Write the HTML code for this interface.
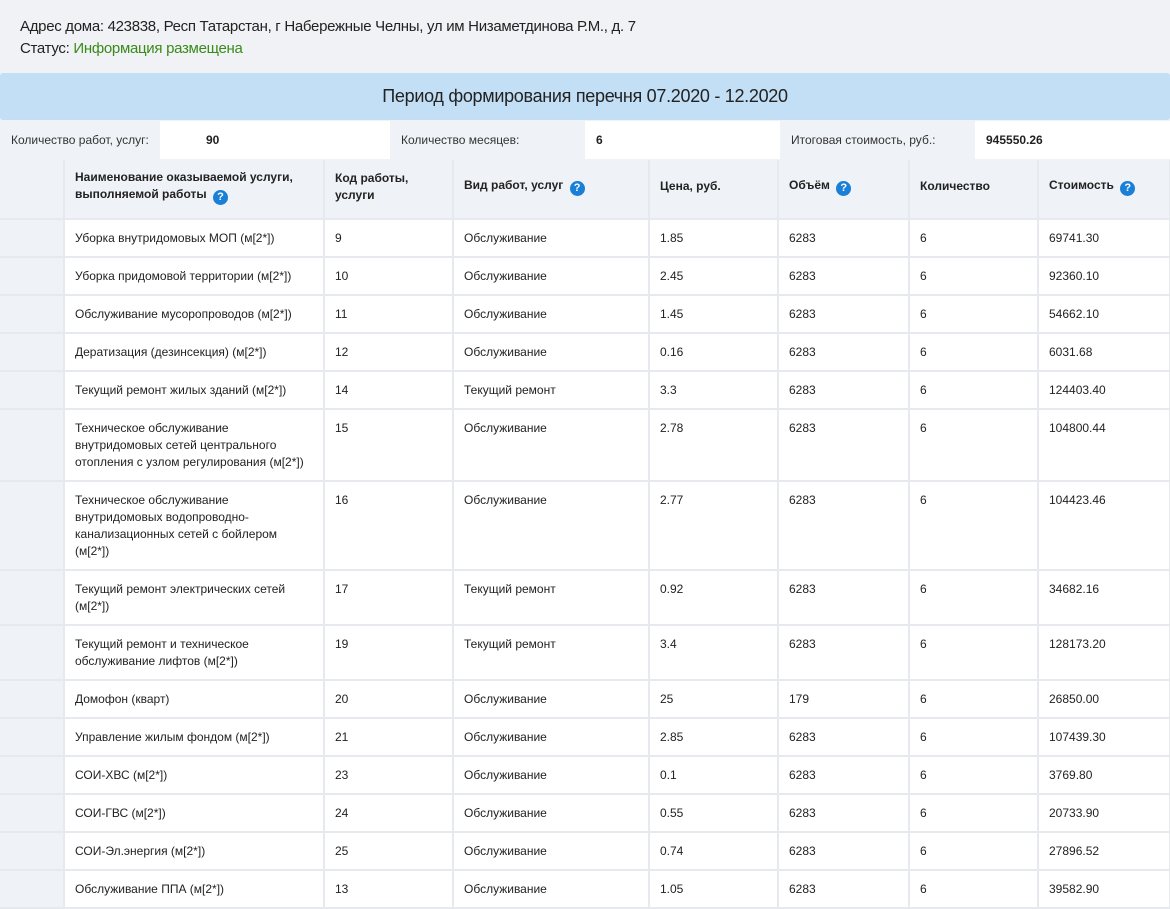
<!DOCTYPE html>
<html><head><meta charset="utf-8"><style>
*{box-sizing:border-box;margin:0;padding:0}
body{width:1170px;height:909px;overflow:hidden;background:#f0f2f5;font-family:"Liberation Sans Narrow","Liberation Sans",sans-serif;color:#222}
.addr{position:absolute;left:20px;top:16px;font-size:15px;line-height:22px;letter-spacing:-0.3px}
.addr .g{color:#3a8a1a}
.band{position:absolute;left:0;top:73px;width:1170px;height:47px;background:#c2dff5;border-radius:3px;text-align:center;font-size:18px;line-height:47px;color:#222;letter-spacing:-0.3px}
.info{position:absolute;left:0;top:121px;width:1170px;height:38px;font-size:12px}
.info div{position:absolute;top:0;height:38px;line-height:38px;padding-left:11px}
.lab{background:#eff2f6;color:#333}
.val{background:#fff;font-weight:bold;padding-left:46px!important}
table{position:absolute;left:0;top:160px;border-collapse:collapse;table-layout:fixed;width:1170px;font-size:12px}
td,th{border:2px solid #e6eaef;vertical-align:top;text-align:left;padding:10px 10px 9px 10px;line-height:17px}
th{background:#eff2f6;font-weight:bold;height:59px;vertical-align:middle;padding-top:4px;border-top:none}
td{background:#fff}
td:first-child,th:first-child{background:#eff2f6;border-left:none}
.q{display:inline-block;width:15px;height:15px;border-radius:50%;background:#1a7fd6;color:#fff;font-size:11px;line-height:15px;text-align:center;font-weight:bold;vertical-align:-2px;margin-left:3px}
</style></head><body>
<div class="addr">Адрес дома: 423838, Респ Татарстан, г Набережные Челны, ул им Низаметдинова Р.М., д. 7<br>Статус: <span class="g">Информация размещена</span></div>
<div class="band">Период формирования перечня 07.2020 - 12.2020</div>
<div class="info">
<div class="lab" style="left:0;width:160px">Количество работ, услуг:</div>
<div class="val" style="left:160px;width:230px;padding-left:46px">90</div>
<div class="lab" style="left:390px;width:195px">Количество месяцев:</div>
<div class="val" style="left:585px;width:195px;padding-left:11px!important">6</div>
<div class="lab" style="left:780px;width:195px">Итоговая стоимость, руб.:</div>
<div class="val" style="left:975px;width:195px;padding-left:11px!important">945550.26</div>
</div>
<table>
<colgroup><col style="width:64px"><col style="width:260px"><col style="width:129px"><col style="width:196px"><col style="width:129px"><col style="width:131px"><col style="width:129px"><col style="width:132px"></colgroup>
<tr><th></th><th>Наименование оказываемой услуги, выполняемой работы <span class="q">?</span></th><th>Код работы, услуги</th><th>Вид работ, услуг <span class="q">?</span></th><th>Цена, руб.</th><th>Объём <span class="q">?</span></th><th>Количество</th><th>Стоимость <span class="q">?</span></th></tr>
<tr style="height:38px"><td></td><td>Уборка внутридомовых МОП (м[2*])</td><td>9</td><td>Обслуживание</td><td>1.85</td><td>6283</td><td>6</td><td>69741.30</td></tr>
<tr style="height:38px"><td></td><td>Уборка придомовой территории (м[2*])</td><td>10</td><td>Обслуживание</td><td>2.45</td><td>6283</td><td>6</td><td>92360.10</td></tr>
<tr style="height:38px"><td></td><td>Обслуживание мусоропроводов (м[2*])</td><td>11</td><td>Обслуживание</td><td>1.45</td><td>6283</td><td>6</td><td>54662.10</td></tr>
<tr style="height:38px"><td></td><td>Дератизация (дезинсекция) (м[2*])</td><td>12</td><td>Обслуживание</td><td>0.16</td><td>6283</td><td>6</td><td>6031.68</td></tr>
<tr style="height:38px"><td></td><td>Текущий ремонт жилых зданий (м[2*])</td><td>14</td><td>Текущий ремонт</td><td>3.3</td><td>6283</td><td>6</td><td>124403.40</td></tr>
<tr style="height:72px"><td></td><td>Техническое обслуживание внутридомовых сетей центрального отопления с узлом регулирования (м[2*])</td><td>15</td><td>Обслуживание</td><td>2.78</td><td>6283</td><td>6</td><td>104800.44</td></tr>
<tr style="height:89px"><td></td><td>Техническое обслуживание внутридомовых водопроводно-канализационных сетей с бойлером (м[2*])</td><td>16</td><td>Обслуживание</td><td>2.77</td><td>6283</td><td>6</td><td>104423.46</td></tr>
<tr style="height:55px"><td></td><td>Текущий ремонт электрических сетей (м[2*])</td><td>17</td><td>Текущий ремонт</td><td>0.92</td><td>6283</td><td>6</td><td>34682.16</td></tr>
<tr style="height:55px"><td></td><td>Текущий ремонт и техническое обслуживание лифтов (м[2*])</td><td>19</td><td>Текущий ремонт</td><td>3.4</td><td>6283</td><td>6</td><td>128173.20</td></tr>
<tr style="height:38px"><td></td><td>Домофон (кварт)</td><td>20</td><td>Обслуживание</td><td>25</td><td>179</td><td>6</td><td>26850.00</td></tr>
<tr style="height:38px"><td></td><td>Управление жилым фондом (м[2*])</td><td>21</td><td>Обслуживание</td><td>2.85</td><td>6283</td><td>6</td><td>107439.30</td></tr>
<tr style="height:38px"><td></td><td>СОИ-ХВС (м[2*])</td><td>23</td><td>Обслуживание</td><td>0.1</td><td>6283</td><td>6</td><td>3769.80</td></tr>
<tr style="height:38px"><td></td><td>СОИ-ГВС (м[2*])</td><td>24</td><td>Обслуживание</td><td>0.55</td><td>6283</td><td>6</td><td>20733.90</td></tr>
<tr style="height:38px"><td></td><td>СОИ-Эл.энергия (м[2*])</td><td>25</td><td>Обслуживание</td><td>0.74</td><td>6283</td><td>6</td><td>27896.52</td></tr>
<tr style="height:38px"><td></td><td>Обслуживание ППА (м[2*])</td><td>13</td><td>Обслуживание</td><td>1.05</td><td>6283</td><td>6</td><td>39582.90</td></tr>
</table>
</body></html>
